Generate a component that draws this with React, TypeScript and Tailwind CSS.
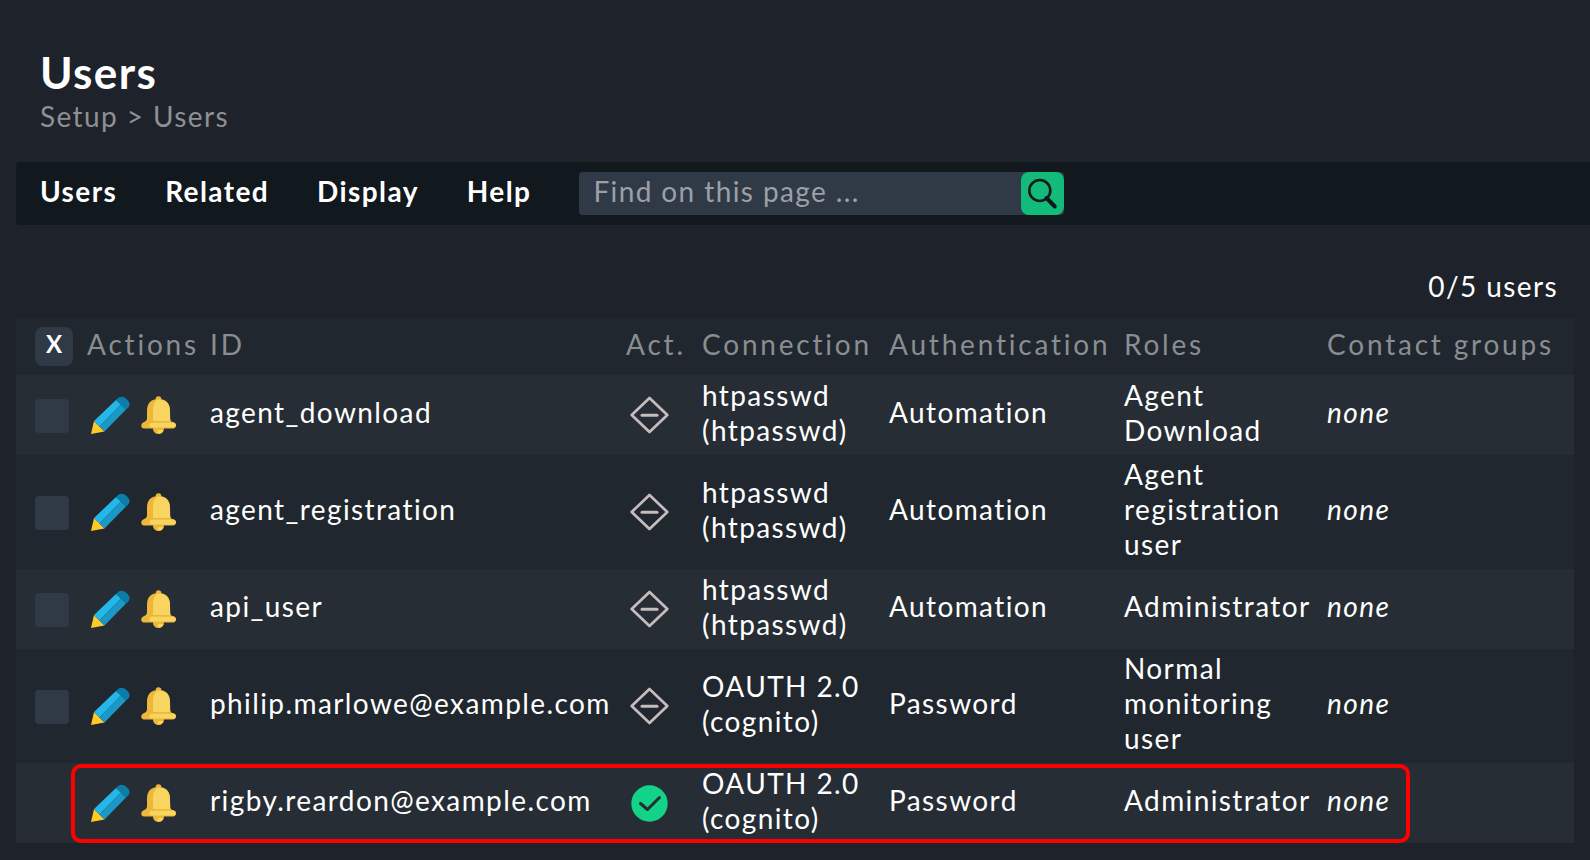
import React from 'react';

type User = {
  id: string;
  active: boolean;
  connection: [string, string];
  authentication: string;
  role: string;
};

const users: User[] = [
  { id: 'agent_download', active: false, connection: ['htpasswd', '(htpasswd)'], authentication: 'Automation', role: 'Agent Download' },
  { id: 'agent_registration', active: false, connection: ['htpasswd', '(htpasswd)'], authentication: 'Automation', role: 'Agent registration user' },
  { id: 'api_user', active: false, connection: ['htpasswd', '(htpasswd)'], authentication: 'Automation', role: 'Administrator' },
  { id: 'philip.marlowe@example.com', active: false, connection: ['OAUTH 2.0', '(cognito)'], authentication: 'Password', role: 'Normal monitoring user' },
  { id: 'rigby.reardon@example.com', active: true, connection: ['OAUTH 2.0', '(cognito)'], authentication: 'Password', role: 'Administrator' },
];

const CURRENT_USER = 'rigby.reardon@example.com';

const menus = ['Users', 'Related', 'Display', 'Help'];

function PencilIcon() {
  return (
    <svg viewBox="0 0 39 38" className="h-[38px] w-[39px]" aria-hidden="true">
      <path d="M0 38 L3 25 L13.500 35.500 Z" fill="#ffca28" />
      <path d="M3 25 L25 4 L30 8.500 L8.500 30.500 Z" fill="#23b7ea" />
      <path d="M8.500 30.500 L30 8.500 L35 13.500 L13.500 35.500 Z" fill="#1a98c6" />
      <path d="M25 4 C28 0 32 -0.500 35.500 3 C39.500 6.500 40 10 35 13.500 Z" fill="#0a7ea9" />
    </svg>
  );
}

function BellIcon() {
  return (
    <svg viewBox="0 0 36 38" className="h-[38px] w-9" aria-hidden="true">
      <circle cx="17.500" cy="3" r="2.800" fill="#edb83a" />
      <circle cx="17.500" cy="32.500" r="5.500" fill="#edb83a" />
      <path d="M18 34 H22.500 A5 5 0 0 1 18 37.500 C16 37 16 35 18 34 Z" fill="#f7d560" />
      <path d="M6 24 V15 C6 7 10 3 17.500 3 C25 3 29 7 29 15 V23 C29.500 25.500 31 26 32.500 26 Q35 27 35 29.500 Q34.500 32.500 32 32.500 H3 Q0.500 32.500 0.200 29.500 Q0.200 27 3 26 C5 25.500 6 24 6 22 Z" fill="#edb83a" />
      <path d="M12 25 V14 C12 8 14.500 3.500 18 3.500 C24.500 3.500 29 7.500 29 15 L29.300 25 Z" fill="#f7d560" />
      <path d="M11 26.800 H32.500 Q35 27 35 29.500 Q34.700 31.500 32.500 31.500 H11 Q8.500 31.500 8.500 29.200 Q8.500 26.800 11 26.800 Z" fill="#f7d560" />
    </svg>
  );
}

function InactiveIcon() {
  return (
    <svg viewBox="0 0 39 38" className="h-[38px] w-[39px]" role="img" aria-label="Inactive">
      <path d="M19.500 2 L37.300 19 L19.500 36 L1.700 19 Z" fill="none" stroke="#c6bcbc" strokeWidth="2.700" strokeLinejoin="round" />
      <path d="M12 19.300 H27" stroke="#c6bcbc" strokeWidth="3" strokeLinecap="round" />
    </svg>
  );
}

function ActiveIcon() {
  return (
    <svg viewBox="0 0 39 38" className="h-[38px] w-[39px]" role="img" aria-label="Active">
      <circle cx="19.500" cy="19.500" r="18.200" fill="#13d389" />
      <path d="M10.500 19.500 L17.500 25.500 L29.500 13.500" fill="none" stroke="#272d34" strokeWidth="3" strokeLinecap="round" strokeLinejoin="round" />
    </svg>
  );
}

function SearchIcon() {
  return (
    <svg viewBox="0 0 43 43" className="size-full" aria-hidden="true">
      <circle cx="18.800" cy="18.500" r="10.500" fill="none" stroke="#11181e" strokeWidth="2.600" />
      <path d="M25.500 26 L33.800 34.500" stroke="#11181e" strokeWidth="4" strokeLinecap="round" />
    </svg>
  );
}

const headCell = 'pt-0 pb-1 text-left font-normal whitespace-nowrap';
const textCell = 'pt-0.5 pb-[7px]';

export default function App() {
  return (
    <div className="min-h-screen bg-[#1e222a] pl-4 font-['Lato',sans-serif] text-[28px] leading-[35px] tracking-wider text-white">
      <header className="pt-[46px] pl-6">
        <h1 className="text-[44px] leading-[52px] font-bold">Users</h1>
        <nav aria-label="Breadcrumb" className="mt-px text-[#8e9093]">
          <a href="#setup">Setup</a> &gt; <a href="#users">Users</a>
        </nav>
      </header>

      <div className="mt-7 flex h-[63px] items-center gap-12 rounded-l bg-[#11181e] pl-6">
        {menus.map((menu) => (
          <button key={menu} type="button" className="pb-1 font-bold tracking-wider">
            {menu}
          </button>
        ))}
        <form className="flex h-[43px] w-[485px] rounded bg-[#303946]" onSubmit={(e) => e.preventDefault()}>
          <input
            type="text"
            aria-label="Find on this page"
            placeholder="Find on this page ..."
            className="min-w-0 flex-1 bg-transparent pb-1 pl-[14px] tracking-wider outline-none placeholder:text-[#9ca0a6]"
          />
          <button type="submit" aria-label="Search" className="size-[43px] rounded-lg bg-[#13bb7a]">
            <SearchIcon />
          </button>
        </form>
      </div>

      <main className="pr-4">
        <p className="mt-11 mb-[14px] pr-4 text-right">0/5 users</p>
        <div className="relative">
          <table className="w-full table-fixed border-collapse bg-[#21272e]">
            <colgroup>
              <col className="w-[71px]" />
              <col className="w-[123px]" />
              <col className="w-[416px]" />
              <col className="w-[76px]" />
              <col className="w-[187px]" />
              <col className="w-[235px]" />
              <col className="w-[203px]" />
              <col />
            </colgroup>
            <thead className="tracking-widest text-[#8a8e92]">
              <tr className="h-[57px]">
                <th className="p-0 pl-[19px] text-left">
                  <button type="button" aria-label="Select all users" className="block h-[39px] w-[38px] rounded-lg bg-[#303946] pb-1.5 text-2xl font-bold tracking-normal text-white">
                    X
                  </button>
                </th>
                <th className={headCell}>Actions</th>
                <th className={headCell}>ID</th>
                <th className={headCell}>Act.</th>
                <th className={headCell}>Connection</th>
                <th className={headCell}>Authentication</th>
                <th className={headCell}>Roles</th>
                <th className={headCell}>Contact groups</th>
              </tr>
            </thead>
            <tbody>
              {users.map((user) => (
                <tr key={user.id} className="h-20 odd:bg-[#272d34]">
                  <td className="p-0 pt-0.5 pl-[19px]">
                    {user.id !== CURRENT_USER && (
                      <input
                        type="checkbox"
                        aria-label={`Select ${user.id}`}
                        className="block size-[34px] appearance-none rounded bg-[#303946] checked:bg-[#13bb7a]"
                      />
                    )}
                  </td>
                  <td className="p-0">
                    <div className="flex items-center gap-[11px] pl-1">
                      <button type="button" aria-label={`Edit ${user.id}`}>
                        <PencilIcon />
                      </button>
                      <button type="button" aria-label={`Notifications of ${user.id}`}>
                        <BellIcon />
                      </button>
                    </div>
                  </td>
                  <td className={textCell}>{user.id}</td>
                  <td className="p-0 pl-1">{user.active ? <ActiveIcon /> : <InactiveIcon />}</td>
                  <td className={textCell}>
                    {user.connection[0]}
                    <br />
                    {user.connection[1]}
                  </td>
                  <td className={textCell}>{user.authentication}</td>
                  <td className={textCell}>{user.role}</td>
                  <td className={textCell}>
                    <i>none</i>
                  </td>
                </tr>
              ))}
            </tbody>
          </table>
          <div className="pointer-events-none absolute bottom-0 left-[55px] h-[79px] w-[1339px] rounded-[10px] border-4 border-[#ff0000]" />
        </div>
      </main>
    </div>
  );
}
